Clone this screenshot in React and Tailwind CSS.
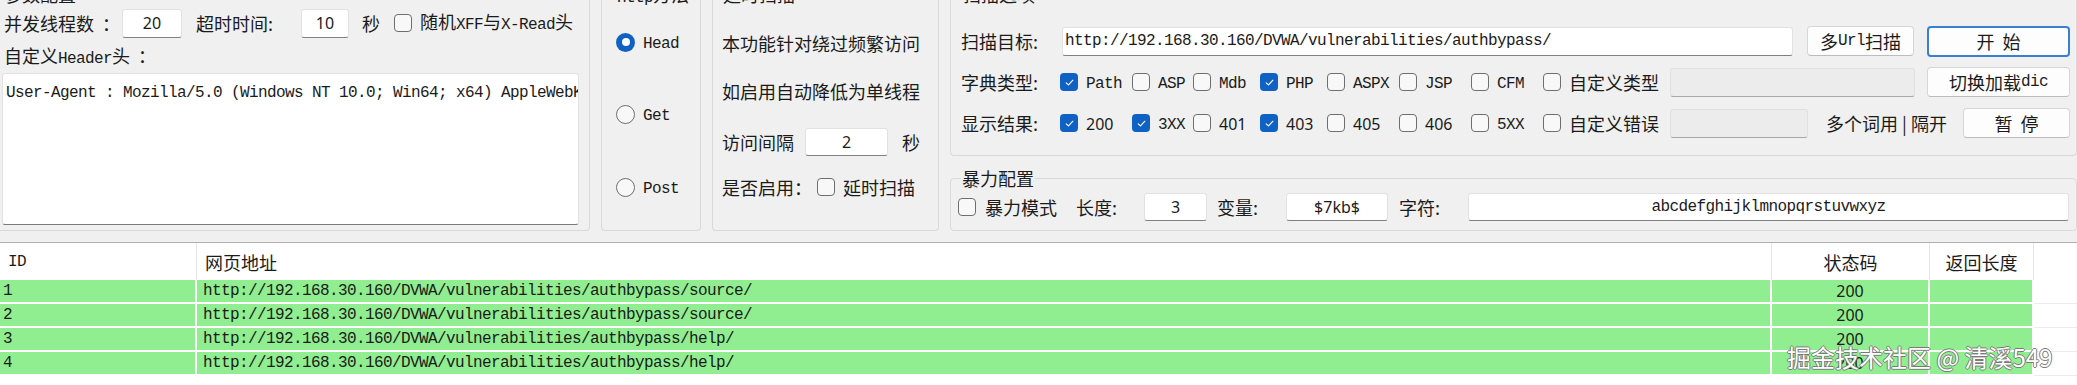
import React from "react";

const rows = [
  { id: 1, url: "http://192.168.30.160/DVWA/vulnerabilities/authbypass/source/", code: 200 },
  { id: 2, url: "http://192.168.30.160/DVWA/vulnerabilities/authbypass/source/", code: 200 },
  { id: 3, url: "http://192.168.30.160/DVWA/vulnerabilities/authbypass/help/", code: 200 },
  { id: 4, url: "http://192.168.30.160/DVWA/vulnerabilities/authbypass/help/", code: 200 },
];

// latin text in the old bitmap-ish monospace look (9px per char)
function L({ children }) {
  return <span className="font-['Liberation_Mono',monospace] text-[16px] tracking-[-0.6px]">{children}</span>;
}

function Num({ children }) {
  return <span className="font-['Noto_Sans',sans-serif] text-[16px]">{children}</span>;
}

function CheckBox({ checked }) {
  if (checked) {
    return (
      <span className="flex h-[18px] w-[18px] shrink-0 items-center justify-center rounded-[4px] bg-[#0f62c4]">
        <svg viewBox="0 0 12 12" className="h-[11px] w-[11px]">
          <path d="M2.4 6.3 L4.9 8.7 L9.7 3.5" fill="none" stroke="white" strokeWidth="1.2" strokeLinecap="round" strokeLinejoin="round" />
        </svg>
      </span>
    );
  }
  return <span className="h-[18px] w-[18px] shrink-0 rounded-[4px] border border-[#6e6e6e] bg-[#f8f8f8]" />;
}

function Radio({ checked }) {
  if (checked) {
    return (
      <span className="flex h-[19px] w-[19px] shrink-0 items-center justify-center rounded-full bg-[#0f62c4]">
        <span className="h-[8px] w-[8px] rounded-full bg-white" />
      </span>
    );
  }
  return <span className="h-[19px] w-[19px] shrink-0 rounded-full border border-[#6e6e6e] bg-[#f8f8f8]" />;
}

function Field({ className = "", children }) {
  return (
    <div className={`flex shrink-0 items-center justify-center rounded-[3px] border border-[#e2e2e2] border-b-[#808080] bg-white ${className}`}>
      {children}
    </div>
  );
}

function GrayField({ className = "" }) {
  return <div className={`shrink-0 rounded-[3px] border border-[#e0e0e0] border-b-[#a8a8a8] bg-[#ececec] ${className}`} />;
}

function Btn({ className = "", primary, children }) {
  return (
    <div
      className={`flex shrink-0 items-center justify-center whitespace-pre rounded-[4px] bg-[#fdfdfd] ${
        primary ? "border-2 border-[#3a80d2]" : "border border-[#d6d6d6] border-b-[#bcbcbc]"
      } ${className}`}
    >
      {children}
    </div>
  );
}

function Check({ w, checked, children }) {
  return (
    <div className="flex shrink-0 items-center" style={{ width: w }}>
      <CheckBox checked={checked} />
      <span className="ml-[8px]">{children}</span>
    </div>
  );
}

function Title({ className = "", children }) {
  return <span className={`absolute bg-[#f0f0f0] px-[1px] leading-[24px] ${className}`}>{children}</span>;
}

export default function App() {
  return (
    <div className="relative flex h-[385px] w-[2077px] flex-col overflow-hidden bg-[#f0f0f0] font-['Noto_Sans_CJK_SC',sans-serif] text-[18px] leading-[24px] text-[#1b1b1b]">
      {/* settings groups */}
      <div className="flex shrink-0 items-start">
        {/* 参数配置 */}
        <div className="relative h-[231px] w-[590px] shrink-0 rounded-br-[4px] border-r border-b border-[#d9d9d9]">
          <Title className="-top-[18px] left-[3px]">参数配置</Title>
          <div className="mt-[8px] flex h-[30px] items-center pl-[4px]">
            <span className="w-[118px] shrink-0 whitespace-pre">并发线程数  ：</span>
            <Field className="h-[29px] w-[60px]"><Num>20</Num></Field>
            <span className="ml-[14px] w-[105px] shrink-0">超时时间:</span>
            <Field className="h-[29px] w-[48px]"><Num>10</Num></Field>
            <span className="ml-[13px] w-[32px] shrink-0">秒</span>
            <CheckBox />
            <span className="ml-[8px] whitespace-nowrap">随机<L>XFF</L>与<L>X-Read</L>头</span>
          </div>
          <div className="mt-[5px] h-[24px] whitespace-pre pl-[4px]">自定义<L>Header</L>头  ：</div>
          <div className="ml-[2px] mt-[6px] h-[152px] w-[577px] overflow-hidden whitespace-nowrap rounded-[3px] border border-[#e2e2e2] border-b-[#7a7a7a] bg-white px-[3px] pt-[4px] leading-[22px]">
            <L>User-Agent : Mozilla/5.0 (Windows NT 10.0; Win64; x64) AppleWebKit/537.36</L>
          </div>
        </div>

        {/* Http方法 */}
        <div className="relative ml-[11px] h-[231px] w-[100px] shrink-0 rounded-b-[4px] border border-t-0 border-[#d9d9d9] pl-[14px]">
          <Title className="-top-[18px] left-[14px]"><L>Http</L>方法</Title>
          <div className="mt-[27px] flex h-[30px] items-center">
            <Radio checked />
            <span className="ml-[8px]"><L>Head</L></span>
          </div>
          <div className="mt-[42px] flex h-[30px] items-center">
            <Radio />
            <span className="ml-[8px]"><L>Get</L></span>
          </div>
          <div className="mt-[43px] flex h-[30px] items-center">
            <Radio />
            <span className="ml-[8px]"><L>Post</L></span>
          </div>
        </div>

        {/* 延时扫描 */}
        <div className="relative ml-[11px] h-[231px] w-[227px] shrink-0 rounded-b-[4px] border border-t-0 border-[#d9d9d9] pl-[9px]">
          <Title className="-top-[18px] left-[9px]">延时扫描</Title>
          <div className="mt-[28px] flex h-[30px] items-center whitespace-nowrap">本功能针对绕过频繁访问</div>
          <div className="mt-[18px] flex h-[30px] items-center whitespace-nowrap">如启用自动降低为单线程</div>
          <div className="mt-[21px] flex h-[30px] items-center">
            <span className="w-[83px] shrink-0">访问间隔</span>
            <Field className="h-[28px] w-[83px]"><Num>2</Num></Field>
            <span className="ml-[14px]">秒</span>
          </div>
          <div className="mt-[15px] flex h-[30px] items-center">
            <span className="w-[95px] shrink-0">是否启用：</span>
            <CheckBox />
            <span className="ml-[8px]">延时扫描</span>
          </div>
        </div>

        {/* 扫描选项 + 暴力配置 */}
        <div className="ml-[11px] flex w-[1127px] shrink-0 flex-col">
          <div className="relative h-[156px] rounded-b-[4px] border border-t-0 border-[#d9d9d9] pl-[10px]">
            <Title className="-top-[18px] left-[11px]">扫描选项</Title>
            <div className="mt-[26px] flex h-[30px] items-center">
              <span className="w-[101px] shrink-0">扫描目标:</span>
              <Field className="h-[29px] w-[731px] justify-start! pl-[2px]">
                <L>http://192.168.30.160/DVWA/vulnerabilities/authbypass/</L>
              </Field>
              <Btn className="ml-[14px] h-[30px] w-[107px]">多<L>Url</L>扫描</Btn>
              <Btn primary className="ml-[13px] h-[31px] w-[143px]">开  始</Btn>
            </div>
            <div className="mt-[11px] flex h-[30px] items-center">
              <span className="w-[99px] shrink-0">字典类型:</span>
              <Check w={72} checked><L>Path</L></Check>
              <Check w={61}><L>ASP</L></Check>
              <Check w={67}><L>Mdb</L></Check>
              <Check w={67} checked><L>PHP</L></Check>
              <Check w={72}><L>ASPX</L></Check>
              <Check w={72}><L>JSP</L></Check>
              <Check w={72}><L>CFM</L></Check>
              <Check w={127}>自定义类型</Check>
              <GrayField className="h-[29px] w-[245px]" />
              <Btn className="ml-[12px] h-[30px] w-[143px]">切换加载<L>dic</L></Btn>
            </div>
            <div className="mt-[11px] flex h-[30px] items-center">
              <span className="w-[99px] shrink-0">显示结果:</span>
              <Check w={72} checked><Num>200</Num></Check>
              <Check w={61} checked><L>3XX</L></Check>
              <Check w={67}><Num>401</Num></Check>
              <Check w={67} checked><Num>403</Num></Check>
              <Check w={72}><Num>405</Num></Check>
              <Check w={72}><Num>406</Num></Check>
              <Check w={72}><L>5XX</L></Check>
              <Check w={127}>自定义错误</Check>
              <GrayField className="h-[29px] w-[138px]" />
              <span className="w-[155px] shrink-0 whitespace-nowrap pl-[18px]">多个词用 | 隔开</span>
              <Btn className="h-[30px] w-[107px]">暂  停</Btn>
            </div>
          </div>

          <div className="relative mt-[22px] h-[53px] rounded-[4px] border border-[#d9d9d9] pl-[7px] pt-[14px]">
            <Title className="-top-[13px] left-[10px]">暴力配置</Title>
            <div className="flex h-[28px] items-center">
              <div className="flex w-[118px] shrink-0 items-center">
                <CheckBox />
                <span className="ml-[9px]">暴力模式</span>
              </div>
              <span className="w-[68px] shrink-0">长度:</span>
              <Field className="h-[28px] w-[63px]"><Num>3</Num></Field>
              <span className="ml-[10px] w-[69px] shrink-0">变量:</span>
              <Field className="h-[28px] w-[102px]"><Num>$7kb$</Num></Field>
              <span className="ml-[11px] w-[69px] shrink-0">字符:</span>
              <Field className="h-[28px] w-[601px]"><L>abcdefghijklmnopqrstuvwxyz</L></Field>
            </div>
          </div>
        </div>
      </div>

      {/* results list */}
      <div className="mt-[11px] flex-1 border-t border-[#b0b0b0] bg-white">
        <div className="flex h-[37px] items-center">
          <div className="flex h-full w-[197px] shrink-0 items-center border-r border-[#e6e6e6] pl-[8px]"><L>ID</L></div>
          <div className="flex h-full w-[1575px] shrink-0 items-center border-r border-[#e6e6e6] pl-[8px]">网页地址</div>
          <div className="flex h-full w-[158px] shrink-0 items-center justify-center border-r border-[#e6e6e6]">状态码</div>
          <div className="flex h-full w-[104px] shrink-0 items-center justify-center border-r border-[#e6e6e6]">返回长度</div>
          <div className="h-full flex-1" />
        </div>
        {rows.map((r) => (
          <div key={r.id} className="flex h-[24px]">
            <div className="flex w-[197px] shrink-0 items-center border-r-2 border-b-2 border-white bg-[#90ee90] pl-[3px]"><L>{r.id}</L></div>
            <div className="flex w-[1575px] shrink-0 items-center border-r-2 border-b-2 border-white bg-[#90ee90] pl-[6px]"><L>{r.url}</L></div>
            <div className="flex w-[158px] shrink-0 items-center justify-center border-r-2 border-b-2 border-white bg-[#90ee90]"><Num>{r.code}</Num></div>
            <div className="w-[104px] shrink-0 border-r-2 border-b-2 border-white bg-[#90ee90]" />
            <div className="flex-1 border-b border-[#ececec]" />
          </div>
        ))}
      </div>

      {/* watermark */}
      <div className="absolute left-[1787px] top-[342px] whitespace-nowrap text-[24px] leading-[30px] text-white [text-shadow:1px_0_#7a7a7a,-1px_0_#7a7a7a,0_1px_#7a7a7a,0_-1px_#7a7a7a]">
        掘金技术社区 @ 清溪549
      </div>
    </div>
  );
}
